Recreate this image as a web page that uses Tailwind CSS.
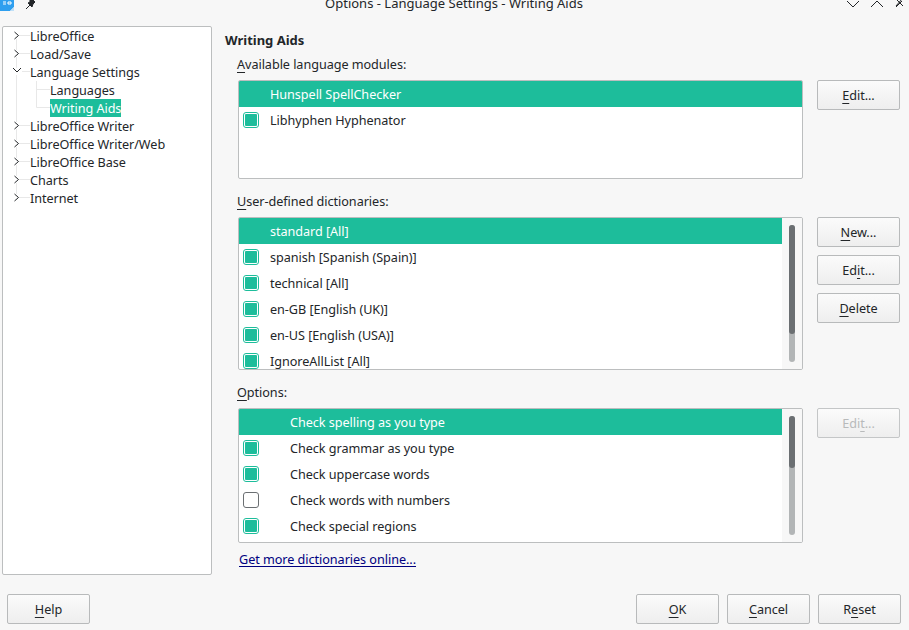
<!doctype html>
<html lang="en">
    <head>
        <meta charset="UTF-8" />
        <title>Options - Language Settings - Writing Aids</title>
        <script src="https://cdn.jsdelivr.net/npm/@tailwindcss/browser@4"></script>
    </head>
    <body class="w-[909px] h-[630px] overflow-hidden bg-[#f7f7f7] text-[#232629] font-['Noto_Sans',sans-serif] text-[12.65px] tracking-[-0.05px] leading-[18px]">
        <!-- title bar, cut off by the top of the screenshot -->
        <div class="h-[26px] relative overflow-hidden">
            <svg class="absolute left-0 top-0" width="16" height="12" viewBox="0 0 16 12">
                <path d="M0 0H14V7L10 11H0Z" fill="#2f9fef" />
                <path d="M3 2H6M3 4H6M8 2H11V4H8Z" stroke="#fff" fill="none" />
                <path d="M10 11L14 7V11Z" fill="#bfe0f8" />
            </svg>
            <svg class="absolute left-[25px] top-0" width="12" height="10" viewBox="0 0 12 10">
                <path d="M1 9L5 5M3 3L7 7L8 4L10 2L8 0H5L5 2Z" stroke="#232629" fill="#232629" />
            </svg>
            <div class="text-center text-[13px] tracking-normal mt-[-6px] pr-[1px]">Options - Language Settings - Writing Aids</div>
            <svg class="absolute left-[846px] top-0" width="62" height="8" viewBox="0 0 62 8" fill="none" stroke="#232629">
                <path d="M1 1L7 7L13 1" />
                <path d="M25 7L31 1L37 7" />
                <path d="M50 7L56 1M50 -1L57 6M56 -1L50 6" />
            </svg>
        </div>

        <div class="flex h-[568px]">
            <!-- options tree -->
            <div class="w-[210px] h-[549px] ml-[2px] shrink-0 bg-white border border-[#bcbebf] rounded-[2px] text-[#232629]">
                <div class="h-[18px] flex items-center">
                    <svg class="ml-[9px] w-[18px] shrink-0" width="18" height="18" viewBox="0 0 18 18" fill="none">
                        <path d="M4.500 12V18M7 8.500H18" stroke="#e8e8e8" />
                        <path d="M2.500 5L6.500 8.500L2.500 12" stroke="#232629" />
                    </svg>
                    <span>LibreOffice</span>
                </div>
                <div class="h-[18px] flex items-center">
                    <svg class="ml-[9px] w-[18px] shrink-0" width="18" height="18" viewBox="0 0 18 18" fill="none">
                        <path d="M4.500 0V5M4.500 12V18M7 8.500H18" stroke="#e8e8e8" />
                        <path d="M2.500 5L6.500 8.500L2.500 12" stroke="#232629" />
                    </svg>
                    <span>Load/Save</span>
                </div>
                <div class="h-[18px] flex items-center">
                    <svg class="ml-[9px] w-[18px] shrink-0" width="18" height="18" viewBox="0 0 18 18" fill="none">
                        <path d="M4.500 0V5M4.500 12V18M10 8.500H18" stroke="#e8e8e8" />
                        <path d="M1 5L5 9L9 5" stroke="#232629" />
                    </svg>
                    <span>Language Settings</span>
                </div>
                <div class="h-[18px] flex items-center relative">
                    <svg class="ml-[9px] w-[38px] shrink-0" width="38" height="18" viewBox="0 0 38 18" fill="none">
                        <path d="M4.500 0V18M24.500 0V18M24.500 8.500H38" stroke="#e8e8e8" />
                    </svg>
                    <span>Languages</span>
                </div>
                <div class="h-[18px] flex items-center">
                    <svg class="ml-[9px] w-[38px] shrink-0" width="38" height="18" viewBox="0 0 38 18" fill="none">
                        <path d="M4.500 0V18M24.500 0V8.500H38" stroke="#e8e8e8" />
                    </svg>
                    <span class="bg-[#1dbd9b] text-white h-[18px]">Writing Aids</span>
                </div>
                <div class="h-[18px] flex items-center">
                    <svg class="ml-[9px] w-[18px] shrink-0" width="18" height="18" viewBox="0 0 18 18" fill="none">
                        <path d="M4.500 0V5M4.500 12V18M7 8.500H18" stroke="#e8e8e8" />
                        <path d="M2.500 5L6.500 8.500L2.500 12" stroke="#232629" />
                    </svg>
                    <span>LibreOffice Writer</span>
                </div>
                <div class="h-[18px] flex items-center">
                    <svg class="ml-[9px] w-[18px] shrink-0" width="18" height="18" viewBox="0 0 18 18" fill="none">
                        <path d="M4.500 0V5M4.500 12V18M7 8.500H18" stroke="#e8e8e8" />
                        <path d="M2.500 5L6.500 8.500L2.500 12" stroke="#232629" />
                    </svg>
                    <span>LibreOffice Writer/Web</span>
                </div>
                <div class="h-[18px] flex items-center">
                    <svg class="ml-[9px] w-[18px] shrink-0" width="18" height="18" viewBox="0 0 18 18" fill="none">
                        <path d="M4.500 0V5M4.500 12V18M7 8.500H18" stroke="#e8e8e8" />
                        <path d="M2.500 5L6.500 8.500L2.500 12" stroke="#232629" />
                    </svg>
                    <span>LibreOffice Base</span>
                </div>
                <div class="h-[18px] flex items-center">
                    <svg class="ml-[9px] w-[18px] shrink-0" width="18" height="18" viewBox="0 0 18 18" fill="none">
                        <path d="M4.500 0V5M4.500 12V18M7 8.500H18" stroke="#e8e8e8" />
                        <path d="M2.500 5L6.500 8.500L2.500 12" stroke="#232629" />
                    </svg>
                    <span>Charts</span>
                </div>
                <div class="h-[18px] flex items-center">
                    <svg class="ml-[9px] w-[18px] shrink-0" width="18" height="18" viewBox="0 0 18 18" fill="none">
                        <path d="M4.500 0V5M7 8.500H18" stroke="#e8e8e8" />
                        <path d="M2.500 5L6.500 8.500L2.500 12" stroke="#232629" />
                    </svg>
                    <span>Internet</span>
                </div>
            </div>

            <!-- right page -->
            <div class="ml-[13px] w-[675px]">
                <div class="font-bold text-[13px] tracking-normal h-[18px] mt-[5px]">Writing Aids</div>

                <div class="ml-[12px] mt-[6px] h-[18px]"><u class="underline-offset-[3px]">A</u>vailable language modules:</div>
                <div class="flex mt-[7px] ml-[13px]">
                    <div class="w-[565px] h-[99px] bg-white border border-[#bcbebf] rounded-[2px] overflow-hidden">
                        <div class="h-[26px] bg-[#1dbd9b] text-white flex items-center pl-[31px]">Hunspell SpellChecker</div>
                        <div class="h-[26px] flex items-center pl-[4px]">
                            <span class="w-[16px] h-[16px] rounded-[3px] border border-[#1dbd9b] flex items-center justify-center shrink-0"><span class="w-[12px] h-[12px] bg-[#1dbd9b] rounded-[1px]"></span></span>
                            <span class="ml-[11px]">Libhyphen Hyphenator</span>
                        </div>
                    </div>
                    <div class="ml-[14px] w-[83px] h-[30px] flex items-center justify-center border border-[#b8babb] rounded-[2px] bg-linear-to-b from-[#fbfbfb] to-[#eeeeee]"><span><u class="underline-offset-[3px]">E</u>dit...</span></div>
                </div>

                <div class="ml-[12px] mt-[13px] h-[18px]"><u class="underline-offset-[3px]">U</u>ser-defined dictionaries:</div>
                <div class="flex mt-[7px] ml-[13px]">
                    <div class="w-[565px] h-[153px] bg-white border border-[#bcbebf] rounded-[2px] overflow-hidden flex">
                        <div class="w-[543px] shrink-0">
                            <div class="h-[26px] bg-[#1dbd9b] text-white flex items-center pl-[31px]">standard [All]</div>
                            <div class="h-[26px] flex items-center pl-[4px]">
                                <span class="w-[16px] h-[16px] rounded-[3px] border border-[#1dbd9b] flex items-center justify-center shrink-0"><span class="w-[12px] h-[12px] bg-[#1dbd9b] rounded-[1px]"></span></span>
                                <span class="ml-[11px]">spanish [Spanish (Spain)]</span>
                            </div>
                            <div class="h-[26px] flex items-center pl-[4px]">
                                <span class="w-[16px] h-[16px] rounded-[3px] border border-[#1dbd9b] flex items-center justify-center shrink-0"><span class="w-[12px] h-[12px] bg-[#1dbd9b] rounded-[1px]"></span></span>
                                <span class="ml-[11px]">technical [All]</span>
                            </div>
                            <div class="h-[26px] flex items-center pl-[4px]">
                                <span class="w-[16px] h-[16px] rounded-[3px] border border-[#1dbd9b] flex items-center justify-center shrink-0"><span class="w-[12px] h-[12px] bg-[#1dbd9b] rounded-[1px]"></span></span>
                                <span class="ml-[11px]">en-GB [English (UK)]</span>
                            </div>
                            <div class="h-[26px] flex items-center pl-[4px]">
                                <span class="w-[16px] h-[16px] rounded-[3px] border border-[#1dbd9b] flex items-center justify-center shrink-0"><span class="w-[12px] h-[12px] bg-[#1dbd9b] rounded-[1px]"></span></span>
                                <span class="ml-[11px]">en-US [English (USA)]</span>
                            </div>
                            <div class="h-[26px] flex items-center pl-[4px]">
                                <span class="w-[16px] h-[16px] rounded-[3px] border border-[#1dbd9b] flex items-center justify-center shrink-0"><span class="w-[12px] h-[12px] bg-[#1dbd9b] rounded-[1px]"></span></span>
                                <span class="ml-[11px]">IgnoreAllList [All]</span>
                            </div>
                        </div>
                        <div class="flex-1 bg-[#f7f7f7] pt-[7px] pl-[7px]">
                            <div class="w-[6px] h-[137px] rounded-[3px] bg-[#b2b5b6]"><div class="h-[109px] rounded-[3px] bg-[#6b6f72]"></div></div>
                        </div>
                    </div>
                    <div class="ml-[14px] flex flex-col gap-[8px]">
                        <div class="w-[83px] h-[30px] flex items-center justify-center border border-[#b8babb] rounded-[2px] bg-linear-to-b from-[#fbfbfb] to-[#eeeeee]"><span><u class="underline-offset-[3px]">N</u>ew...</span></div>
                        <div class="w-[83px] h-[30px] flex items-center justify-center border border-[#b8babb] rounded-[2px] bg-linear-to-b from-[#fbfbfb] to-[#eeeeee]"><span>Ed<u class="underline-offset-[3px]">i</u>t...</span></div>
                        <div class="w-[83px] h-[30px] flex items-center justify-center border border-[#b8babb] rounded-[2px] bg-linear-to-b from-[#fbfbfb] to-[#eeeeee]"><span><u class="underline-offset-[3px]">D</u>elete</span></div>
                    </div>
                </div>

                <div class="ml-[12px] mt-[13px] h-[18px]"><u class="underline-offset-[3px]">O</u>ptions:</div>
                <div class="flex mt-[7px] ml-[13px]">
                    <div class="w-[565px] h-[135px] bg-white border border-[#bcbebf] rounded-[2px] overflow-hidden flex">
                        <div class="w-[543px] shrink-0">
                            <div class="h-[26px] bg-[#1dbd9b] text-white flex items-center pl-[51px]">Check spelling as you type</div>
                            <div class="h-[26px] flex items-center pl-[4px]">
                                <span class="w-[16px] h-[16px] rounded-[3px] border border-[#1dbd9b] flex items-center justify-center shrink-0"><span class="w-[12px] h-[12px] bg-[#1dbd9b] rounded-[1px]"></span></span>
                                <span class="ml-[31px]">Check grammar as you type</span>
                            </div>
                            <div class="h-[26px] flex items-center pl-[4px]">
                                <span class="w-[16px] h-[16px] rounded-[3px] border border-[#1dbd9b] flex items-center justify-center shrink-0"><span class="w-[12px] h-[12px] bg-[#1dbd9b] rounded-[1px]"></span></span>
                                <span class="ml-[31px]">Check uppercase words</span>
                            </div>
                            <div class="h-[26px] flex items-center pl-[4px]">
                                <span class="w-[16px] h-[16px] rounded-[3px] border border-[#6b6f72] shrink-0"></span>
                                <span class="ml-[31px]">Check words with numbers</span>
                            </div>
                            <div class="h-[26px] flex items-center pl-[4px]">
                                <span class="w-[16px] h-[16px] rounded-[3px] border border-[#1dbd9b] flex items-center justify-center shrink-0"><span class="w-[12px] h-[12px] bg-[#1dbd9b] rounded-[1px]"></span></span>
                                <span class="ml-[31px]">Check special regions</span>
                            </div>
                        </div>
                        <div class="flex-1 bg-[#f7f7f7] pt-[7px] pl-[7px]">
                            <div class="w-[6px] h-[119px] rounded-[3px] bg-[#b2b5b6]"><div class="h-[52px] rounded-[3px] bg-[#6b6f72]"></div></div>
                        </div>
                    </div>
                    <div class="ml-[14px] w-[83px] h-[30px] flex items-center justify-center border border-[#c4c6c7] rounded-[2px] bg-linear-to-b from-[#fbfbfb] to-[#eeeeee] text-[#b8babb]"><span>Edi<u class="underline-offset-[3px]">t</u>...</span></div>
                </div>

                <div class="ml-[14px] mt-[7px] h-[18px]"><a href="#" class="underline text-[#000080] underline-offset-[2px]">Get more dictionaries online...</a></div>
            </div>
        </div>

        <!-- dialog buttons -->
        <div class="flex mt-0 pl-[7px]">
            <div class="w-[83px] h-[30px] flex items-center justify-center border border-[#b8babb] rounded-[2px] bg-linear-to-b from-[#fbfbfb] to-[#eeeeee]"><span><u class="underline-offset-[3px]">H</u>elp</span></div>
            <div class="ml-auto mr-[8px] flex gap-[8px]">
                <div class="w-[83px] h-[30px] flex items-center justify-center border border-[#b8babb] rounded-[2px] bg-linear-to-b from-[#fbfbfb] to-[#eeeeee]"><span><u class="underline-offset-[3px]">O</u>K</span></div>
                <div class="w-[83px] h-[30px] flex items-center justify-center border border-[#b8babb] rounded-[2px] bg-linear-to-b from-[#fbfbfb] to-[#eeeeee]"><span><u class="underline-offset-[3px]">C</u>ancel</span></div>
                <div class="w-[83px] h-[30px] flex items-center justify-center border border-[#b8babb] rounded-[2px] bg-linear-to-b from-[#fbfbfb] to-[#eeeeee]"><span>R<u class="underline-offset-[3px]">e</u>set</span></div>
            </div>
        </div>
    </body>
</html>
